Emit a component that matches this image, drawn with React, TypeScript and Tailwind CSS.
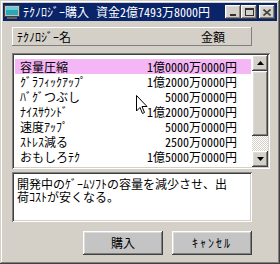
import * as React from 'react';

// ============================================================================
// Data
// ============================================================================

const techs = [
  { name: '容量圧縮', price: '1億0000万0000円' },
  { name: 'ｸﾞﾗﾌｨｯｸｱｯﾌﾟ', price: '1億2000万0000円' },
  { name: 'ﾊﾞｸﾞつぶし', price: '5000万0000円' },
  { name: 'ﾅｲｽｻｳﾝﾄﾞ', price: '1億2000万0000円' },
  { name: '速度ｱｯﾌﾟ', price: '5000万0000円' },
  { name: 'ｽﾄﾚｽ減る', price: '2500万0000円' },
  { name: 'おもしろﾃｸ', price: '1億5000万0000円' },
];

const raised =
  'shadow-[inset_-1px_-1px_#404040,inset_1px_1px_#ffffff,inset_-2px_-2px_#808080,inset_2px_2px_#dcdcdc]';
const sunken =
  'shadow-[inset_1px_1px_#808080,inset_-1px_-1px_#ffffff,inset_2px_2px_#404040,inset_-2px_-2px_#d4d0c8]';

// ============================================================================
// Pieces
// ============================================================================

function CaptionButton({ children }: { children: React.ReactNode }) {
  return (
    <div className={`w-[16px] h-[14px] bg-[#d4d0c8] flex items-center justify-center ${raised}`}>
      {children}
    </div>
  );
}

function ScrollArrow({ down }: { down?: boolean }) {
  return (
    <div className={`h-[16px] bg-[#d4d0c8] flex items-center justify-center ${raised}`}>
      <svg width="7" height="4" viewBox="0 0 7 4">
        {down ? (
          <polygon points="0,0 7,0 3.5,4" fill="#000" />
        ) : (
          <polygon points="0,4 7,4 3.5,0" fill="#000" />
        )}
      </svg>
    </div>
  );
}

function PushButton({ label, spaced }: { label: string; spaced?: boolean }) {
  return (
    <div
      className={`w-[80px] h-[24px] bg-[#c4c4c4] flex items-center justify-center text-[12px] text-black ${
        spaced ? 'tracking-[2px]' : ''
      } ${raised}`}
    >
      {label}
    </div>
  );
}

// ============================================================================
// Main Component
// ============================================================================

export default function App() {
  return (
    <div
      className={`relative w-[280px] h-[264px] bg-[#d4d0c8] p-[3px] flex flex-col font-['Noto_Sans_CJK_JP',sans-serif] [font-feature-settings:'hwid'] leading-none shadow-[inset_-1px_-1px_#404040,inset_1px_1px_#d4d0c8,inset_-2px_-2px_#808080,inset_2px_2px_#ffffff]`}
    >
      {/* title bar */}
      <div className="h-[18px] bg-[#0a246a] flex items-center pl-[1px] pr-[2px]">
        <svg width="16" height="14" viewBox="0 0 16 14" className="shrink-0">
          <rect x="0.5" y="0.5" width="15" height="11" fill="#c0c0c0" stroke="#404040" />
          <rect x="2" y="2" width="12" height="8" fill="#2aa8b8" />
          <rect x="2" y="2" width="12" height="3" fill="#5fd0dc" />
          <rect x="3" y="12" width="10" height="2" fill="#606060" />
        </svg>
        <span className="ml-[3px] text-[12px] text-white whitespace-nowrap">ﾃｸﾉﾛｼﾞｰ購入</span>
        <span className="ml-[7px] text-[12px] text-white whitespace-nowrap">資金2億7493万8000円</span>
        <div className="ml-auto flex items-center">
          <CaptionButton>
            <div className="w-[6px] h-[2px] bg-[#303030] mt-[6px]" />
          </CaptionButton>
          <CaptionButton>
            <div className="w-[9px] h-[8px] border border-[#303030] border-t-2" />
          </CaptionButton>
          <div className="w-[2px]" />
          <CaptionButton>
            <svg width="8" height="7" viewBox="0 0 8 7">
              <path d="M0.5 0.5 L7.5 6.5 M7.5 0.5 L0.5 6.5" stroke="#404040" strokeWidth="1.6" />
            </svg>
          </CaptionButton>
        </div>
      </div>

      {/* body */}
      <div className="flex-1 flex flex-col pl-[9px] pr-[7px] pt-[6px]">
        <div
          className={`w-[240px] h-[19px] flex items-center justify-between pl-[5px] pr-[27px] text-[12px] text-black shadow-[inset_-1px_-1px_#808080,inset_1px_1px_#ffffff]`}
        >
          <span>ﾃｸﾉﾛｼﾞｰ名</span>
          <span>金額</span>
        </div>

        <div className={`mt-[7px] w-[258px] h-[116px] bg-white p-[2px] flex ${sunken}`}>
          <div className="flex-1 flex flex-col pt-[4px] pl-[1px] pr-[1px]">
            {techs.map((t, i) => (
              <div
                key={i}
                className={`h-[15px] flex items-center justify-between pl-[5px] pr-[14px] text-[12px] text-black ${
                  i === 0 ? 'bg-[#f4b6f4]' : ''
                }`}
              >
                <span>{t.name}</span>
                <span>{t.price}</span>
              </div>
            ))}
          </div>
          <div className="w-[16px] flex flex-col">
            <ScrollArrow />
            <div className={`h-[65px] bg-[#d4d0c8] ${raised}`} />
            <div className="flex-1 bg-[image:repeating-conic-gradient(#ffffff_0%_25%,#d4d0c8_0%_50%)] bg-[length:2px_2px]" />
            <ScrollArrow down />
          </div>
        </div>

        <div
          className={`mt-[3px] w-[240px] h-[50px] bg-white pl-[5px] pt-[5px] text-[12px] leading-[13px] text-black whitespace-nowrap ${sunken}`}
        >
          開発中のｹﾞｰﾑｿﾌﾄの容量を減少させ、出
          <br />
          荷ｺｽﾄが安くなる。
        </div>

        <div className="mt-[9px] w-[240px] flex justify-end gap-[9px]">
          <PushButton label="購入" />
          <PushButton label="ｷｬﾝｾﾙ" spaced />
        </div>
      </div>

      {/* mouse pointer */}
      <svg
        width="12"
        height="20"
        viewBox="0 0 12 20"
        className="absolute left-[136px] top-[95px]"
      >
        <path
          d="M0.5 0.5 L0.5 16 L4 12.5 L6.5 18.5 L8.5 17.5 L6 11.5 L11 11.5 Z"
          fill="#ffffff"
          stroke="#000000"
          strokeWidth="1"
        />
      </svg>
    </div>
  );
}
